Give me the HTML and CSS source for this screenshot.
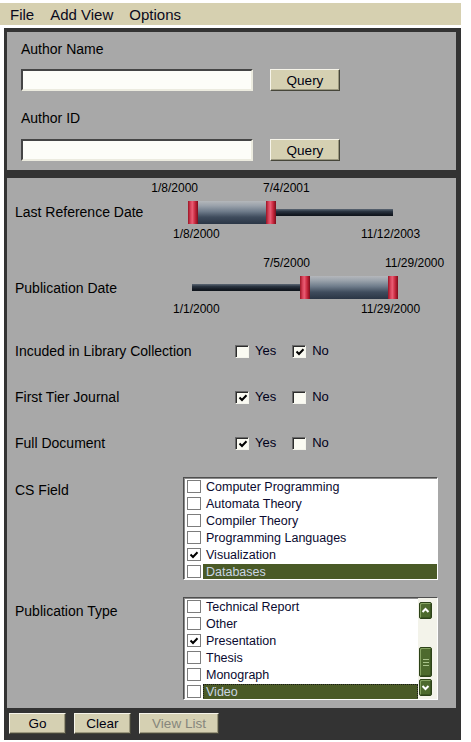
FILE: index.html
```html
<!DOCTYPE html>
<html>
<head>
<meta charset="utf-8">
<title>Search</title>
<link rel="stylesheet" href="styles.css">
</head>
<body>
<div class="app">
  <div class="menubar">
    <span class="menu-item">File</span>
    <span class="menu-item">Add View</span>
    <span class="menu-item">Options</span>
  </div>
  <div class="frame">
    <section class="panel panel-author">
      <div class="field-label">Author Name</div>
      <div class="field-row">
        <input class="text-input" type="text">
        <button class="btn btn-query">Query</button>
      </div>
      <div class="field-label field-label-2">Author ID</div>
      <div class="field-row field-row-2">
        <input class="text-input" type="text">
        <button class="btn btn-query">Query</button>
      </div>
    </section>
    <div class="separator"></div>
    <section class="panel panel-filters">
      <div class="slider-row">
        <div class="row-label">Last Reference Date</div>
        <div class="slider">
          <div class="track" style="left:15px;width:205px"></div>
          <div class="range" style="left:25px;width:68px"></div>
          <div class="handle handle-lo" style="left:15px"><span class="handle-label">1/8/2000</span></div>
          <div class="handle handle-hi" style="left:93px"><span class="handle-label">7/4/2001</span></div>
          <span class="bound-label bound-min">1/8/2000</span>
          <span class="bound-label bound-max">11/12/2003</span>
        </div>
      </div>
      <div class="slider-row slider-row-2">
        <div class="row-label">Publication Date</div>
        <div class="slider">
          <div class="track" style="left:19px;width:206px"></div>
          <div class="range" style="left:137px;width:78px"></div>
          <div class="handle handle-lo" style="left:127px"><span class="handle-label">7/5/2000</span></div>
          <div class="handle handle-hi" style="left:215px"><span class="handle-label">11/29/2000</span></div>
          <span class="bound-label bound-min">1/1/2000</span>
          <span class="bound-label bound-max">11/29/2000</span>
        </div>
      </div>

      <div class="check-row">
        <div class="row-label">Incuded in Library Collection</div>
        <div class="check-group">
          <span class="check-option"><span class="checkbox"></span>Yes</span>
          <span class="check-option"><span class="checkbox"><svg class="tick" viewBox="0 0 10 10"><path d="M1.5 4.5 L4 7 L8.5 2.2"/></svg></span>No</span>
        </div>
      </div>
      <div class="check-row">
        <div class="row-label">First Tier Journal</div>
        <div class="check-group">
          <span class="check-option"><span class="checkbox"><svg class="tick" viewBox="0 0 10 10"><path d="M1.5 4.5 L4 7 L8.5 2.2"/></svg></span>Yes</span>
          <span class="check-option"><span class="checkbox"></span>No</span>
        </div>
      </div>
      <div class="check-row">
        <div class="row-label">Full Document</div>
        <div class="check-group">
          <span class="check-option"><span class="checkbox"><svg class="tick" viewBox="0 0 10 10"><path d="M1.5 4.5 L4 7 L8.5 2.2"/></svg></span>Yes</span>
          <span class="check-option"><span class="checkbox"></span>No</span>
        </div>
      </div>

      <div class="list-row">
        <div class="row-label">CS Field</div>
        <div class="listbox">
          <ul class="list-items">
            <li class="list-item"><span class="list-check"></span><span class="list-text">Computer Programming</span></li>
            <li class="list-item"><span class="list-check"></span><span class="list-text">Automata Theory</span></li>
            <li class="list-item"><span class="list-check"></span><span class="list-text">Compiler Theory</span></li>
            <li class="list-item"><span class="list-check"></span><span class="list-text">Programming Languages</span></li>
            <li class="list-item"><span class="list-check"><svg class="tick" viewBox="0 0 10 10"><path d="M1.5 4.5 L4 7 L8.5 2.2"/></svg></span><span class="list-text">Visualization</span></li>
            <li class="list-item is-selected"><span class="list-check"></span><span class="list-text">Databases</span></li>
          </ul>
        </div>
      </div>

      <div class="list-row list-row-2">
        <div class="row-label">Publication Type</div>
        <div class="listbox">
          <ul class="list-items">
            <li class="list-item"><span class="list-check"></span><span class="list-text">Technical Report</span></li>
            <li class="list-item"><span class="list-check"></span><span class="list-text">Other</span></li>
            <li class="list-item"><span class="list-check"><svg class="tick" viewBox="0 0 10 10"><path d="M1.5 4.5 L4 7 L8.5 2.2"/></svg></span><span class="list-text">Presentation</span></li>
            <li class="list-item"><span class="list-check"></span><span class="list-text">Thesis</span></li>
            <li class="list-item"><span class="list-check"></span><span class="list-text">Monograph</span></li>
            <li class="list-item is-selected is-focused"><span class="list-check"></span><span class="list-text">Video</span></li>
          </ul>
          <div class="scrollbar">
            <span class="scroll-btn"><svg viewBox="0 0 11 11"><path d="M2.5 7 L5.5 4 L8.5 7"/></svg></span>
            <span class="scroll-thumb"><span class="grip"></span><span class="grip"></span><span class="grip"></span></span>
            <span class="scroll-btn"><svg viewBox="0 0 11 11"><path d="M2.5 4 L5.5 7 L8.5 4"/></svg></span>
          </div>
        </div>
      </div>
    </section>
    <div class="actions">
      <button class="btn btn-action">Go</button>
      <button class="btn btn-action">Clear</button>
      <button class="btn btn-action btn-wide" disabled>View List</button>
    </div>
  </div>
</div>
</body>
</html>
```

FILE: styles.css
```css
* { box-sizing: border-box; }
html, body { margin: 0; padding: 0; background: #ffffff; }
body { font-family: "Liberation Sans", Arial, sans-serif; color: #000; }

.app { width: 461px; padding-top: 3px; }

.menubar {
  height: 22px;
  background: #d6d0b0;
  display: flex;
  align-items: center;
  gap: 16px;
  padding-left: 10px;
  font-size: 15px;
  color: #0a0a1c;
}

.frame {
  margin-top: 3px;
  margin-left: 4px;
  width: 457px;
  background: #333333;
  padding: 4px 5px 6px 3px;
}

.panel { background: #a8a8a8; }

.panel-author { padding: 9px 0 9px 14px; }
.field-label { font-size: 14px; line-height: 16px; }
.field-label-2 { margin-top: 19px; }
.field-row { display: flex; gap: 17px; margin-top: 12px; }
.field-row-2 { margin-top: 13px; }

.text-input {
  width: 232px;
  height: 22px;
  margin: 0;
  border: 2px solid;
  border-color: #454545 #ecebdf #ecebdf #454545;
  background: #fdfdf8;
  outline: none;
}

.btn {
  font-family: "Liberation Sans", Arial, sans-serif;
  font-size: 13.5px;
  height: 22px;
  margin: 0;
  padding: 0;
  color: #000010;
  background: #d5d0b2;
  border: 1px solid;
  border-color: #f6f4ea #46463a #46463a #f6f4ea;
  box-shadow: inset -1px -1px 0 #9c987f;
}
.btn:disabled { color: #86867c; }
.btn-query { width: 70px; }

.separator { height: 8px; }

.panel-filters { padding: 3px 0 8px 8px; }

.row-label { font-size: 14px; line-height: 16px; color: #000; }

.slider-row { display: grid; grid-template-columns: 158px 1fr; height: 75px; }
.slider-row .row-label { padding-top: 23px; }
.slider-row-2 { height: 72px; }
.slider-row-2 .row-label { padding-top: 24px; }

.slider { position: relative; }
.track {
  position: absolute;
  top: 28px;
  height: 7px;
  background: linear-gradient(#5d6875 0%, #2a3441 35%, #151b24 75%, #0f141b 100%);
}
.range {
  position: absolute;
  top: 20px;
  height: 23px;
  background: linear-gradient(#b4b7bb 0%, #9aa2ab 20%, #6f7c8b 45%, #3f4c5d 70%, #2a3545 100%);
}
.handle {
  position: absolute;
  top: 20px;
  width: 10px;
  height: 23px;
  background: linear-gradient(to right, #9c1424 0%, #e04a62 30%, #e65a70 45%, #c8283e 70%, #7c0c1a 100%);
}
.handle-label {
  position: absolute;
  top: -20px;
  font-size: 12px;
  line-height: 14px;
  white-space: nowrap;
}
.handle-lo .handle-label { right: 0; }
.handle-hi .handle-label { left: -3px; }
.bound-label {
  position: absolute;
  top: 46px;
  font-size: 12px;
  line-height: 14px;
  white-space: nowrap;
}
.bound-min { left: 0; }
.bound-max { left: 188px; }

.check-row {
  display: grid;
  grid-template-columns: 220px 1fr;
  align-items: center;
  height: 46px;
}
.check-group { display: flex; gap: 16px; }
.check-option {
  display: flex;
  align-items: center;
  gap: 6px;
  font-size: 13px;
  line-height: 16px;
  color: #00001a;
}
.checkbox {
  width: 14px;
  height: 13px;
  border: 1px solid;
  border-color: #6a6a6a #f4f4ec #f4f4ec #6a6a6a;
  box-shadow: inset 1px 1px 0 #2c2c2c;
  background: #fafaf2;
  display: flex;
  align-items: center;
  justify-content: center;
  padding: 1px 0 0 1px;
}
.tick { width: 10px; height: 10px; display: block; }
.tick path { fill: none; stroke: #000; stroke-width: 2; }

.list-row { display: grid; grid-template-columns: 168px 255px; margin-top: 11px; }
.list-row .row-label { padding-top: 5px; }
.list-row-2 { margin-top: 17px; }
.list-row-2 .row-label { padding-top: 6px; }

.listbox {
  height: 103px;
  border: 1px solid;
  border-color: #4e4e4e #ffffff #ffffff #4e4e4e;
  box-shadow: inset 1px 1px 0 #8c8c8c;
  background: #ffffff;
  overflow: hidden;
  display: flex;
}
.list-items { list-style: none; margin: 0; padding: 0; flex: 1; min-width: 0; }
.list-item {
  height: 17px;
  display: flex;
  align-items: center;
  padding-left: 3px;
  font-size: 12.5px;
  color: #0a0a30;
}
.list-check {
  flex: none;
  width: 14px;
  height: 13px;
  border: 1px solid #7c7c7c;
  background: #fff;
  margin-right: 2px;
  display: flex;
  align-items: center;
  justify-content: center;
}
.list-text {
  flex: 1;
  height: 16px;
  display: flex;
  align-items: center;
  padding-left: 3px;
  white-space: nowrap;
}
.is-selected .list-text { background: #4a5a27; color: #c9d5e4; }
.is-focused .list-text { outline: 1px dotted #1a1a1a; outline-offset: -1px; }

.scrollbar {
  flex: none;
  width: 19px;
  background: #f3f3ea;
  display: flex;
  flex-direction: column;
  padding: 4px 5px 3px 1px;
}
.scroll-btn, .scroll-thumb {
  display: flex;
  align-items: center;
  justify-content: center;
  background: #4d6a2d;
  border: 1px solid #2c4218;
  box-shadow: inset 1px 1px 0 #86a462, inset -1px -1px 0 #3b5522;
  border-radius: 2px;
}
.scroll-btn { height: 17px; }
.scroll-btn svg { width: 11px; height: 11px; display: block; }
.scroll-btn path { fill: none; stroke: #ffffff; stroke-width: 2; }
.scroll-thumb {
  margin-top: auto;
  margin-bottom: 2px;
  height: 30px;
  flex-direction: column;
  gap: 2px;
}
.grip { width: 6px; height: 1px; background: #a9c38a; }

.actions { display: flex; gap: 8px; padding: 5px 0 0 2px; }
.btn-action { width: 57px; height: 21px; }
.btn-wide { width: 80px; }
```
